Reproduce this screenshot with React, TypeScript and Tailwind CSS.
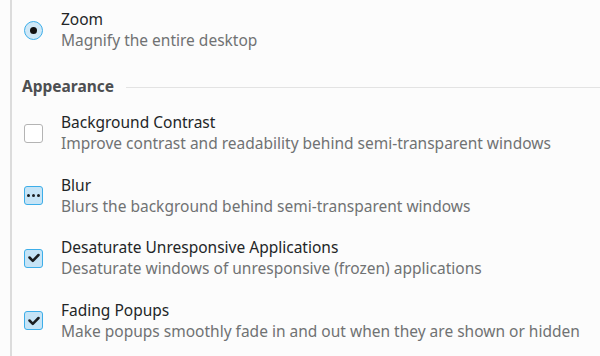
import React from "react";

type Kind = "radio" | "off" | "partial" | "on";

const items: { kind: Kind; title: string; desc: string }[] = [
  { kind: "off", title: "Background Contrast", desc: "Improve contrast and readability behind semi-transparent windows" },
  { kind: "partial", title: "Blur", desc: "Blurs the background behind semi-transparent windows" },
  { kind: "on", title: "Desaturate Unresponsive Applications", desc: "Desaturate windows of unresponsive (frozen) applications" },
  { kind: "on", title: "Fading Popups", desc: "Make popups smoothly fade in and out when they are shown or hidden" },
];

const Indicator = ({ kind }: { kind: Kind }) => {
  if (kind === "radio") {
    return (
      <div className="w-[19px] h-[19px] rounded-full border border-[#3daee9] bg-[#cfe8f7] flex items-center justify-center">
        <div className="w-[7px] h-[7px] rounded-full bg-[#111]" />
      </div>
    );
  }
  if (kind === "off") {
    return <div className="w-[19px] h-[19px] rounded-[3px] border border-[#b4b4b4] bg-white" />;
  }
  return (
    <div className="w-[19px] h-[19px] rounded-[3px] border border-[#3daee9] bg-[#c6e4f6] flex items-center justify-center">
      {kind === "on" ? (
        <svg width="12" height="10" viewBox="0 0 12 10">
          <path d="M1.5 4.5 L4.8 7.8 L10.5 2" fill="none" stroke="#1b1e20" strokeWidth="2.5" strokeLinecap="round" strokeLinejoin="round" />
        </svg>
      ) : (
        <div className="flex gap-[2px]">
          <div className="w-[3px] h-[3px] rounded-full bg-[#1b1e20]" />
          <div className="w-[3px] h-[3px] rounded-full bg-[#1b1e20]" />
          <div className="w-[3px] h-[3px] rounded-full bg-[#1b1e20]" />
        </div>
      )}
    </div>
  );
};

const Row = ({ kind, title, desc }: { kind: Kind; title: string; desc: string }) => (
  <div className="flex items-center h-[62.5px]">
    <div className="w-[39px] pl-[2px] flex">
      <Indicator kind={kind} />
    </div>
    <div className="flex flex-col leading-[21px]">
      <span className="text-[#232627]">{title}</span>
      <span className="text-[#707273]">{desc}</span>
    </div>
  </div>
);

export default function App() {
  return (
    <div
      className="w-[600px] h-[356px] bg-[#fcfcfc] overflow-hidden flex text-[15.5px]"
      style={{ fontFamily: '"Noto Sans", sans-serif' }}
    >
      <div className="w-[10px] shrink-0" />
      <div className="w-[2px] shrink-0 bg-[#dcdcdc]" />
      <div className="flex-1 pl-[10px]">
        <div className="-mt-[1px] [&>div]:h-[62px]">
          <Row kind="radio" title="Zoom" desc="Magnify the entire desktop" />
        </div>
        <div className="flex items-center gap-[12px] h-[26px] mt-[13px] mb-[2px]">
          <span className="font-bold text-[#4d4f51]">Appearance</span>
          <div className="flex-1 h-px bg-[#e3e3e3]" />
        </div>
        {items.map((it) => (
          <Row key={it.title} {...it} />
        ))}
      </div>
    </div>
  );
}
